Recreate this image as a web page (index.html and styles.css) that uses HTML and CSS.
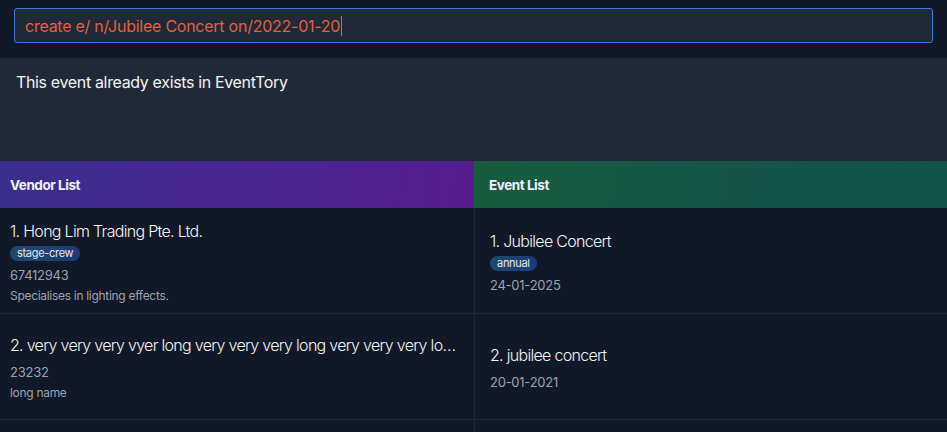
FILE: index.html
```html
<!DOCTYPE html>
<html>
<head>
<meta charset="utf-8">
<link rel="stylesheet" href="styles.css">
</head>
<body>
<div class="app">
  <div class="command-bar">
    <div class="command-input"><span class="cmd-text">create e/ n/Jubilee Concert on/2022-01-20</span><span class="caret"></span></div>
  </div>
  <div class="result">This event already exists in EventTory</div>
  <div class="lists">
    <div class="column vendors">
      <div class="col-header vendor-header">Vendor List</div>
      <div class="card">
        <div class="name">1. Hong Lim Trading Pte. Ltd.</div>
        <div class="tags"><span class="tag">stage-crew</span></div>
        <div class="phone">67412943</div>
        <div class="desc">Specialises in lighting effects.</div>
      </div>
      <div class="card">
        <div class="name">2. very very very vyer long very very very long very very very long name very very long</div>
        <div class="phone">23232</div>
        <div class="desc">long name</div>
      </div>
    </div>
    <div class="column events">
      <div class="col-header event-header">Event List</div>
      <div class="card">
        <div class="name">1. Jubilee Concert</div>
        <div class="tags"><span class="tag">annual</span></div>
        <div class="phone">24-01-2025</div>
      </div>
      <div class="card">
        <div class="name">2. jubilee concert</div>
        <div class="phone">20-01-2021</div>
      </div>
    </div>
  </div>
</div>
</body>
</html>
```

FILE: styles.css
```css
* { box-sizing: border-box; }
html, body { margin: 0; padding: 0; }
body {
  background: #111827;
  font-family: Inter, "Noto Sans", sans-serif;
  color: #f3f4f6;
  width: 947px;
  height: 432px;
  overflow: hidden;
}
.app { display: flex; flex-direction: column; height: 432px; }
.command-bar {
  height: 58px;
  padding: 8px 14px 0 14px;
  background: #111827;
}
.command-input {
  height: 35px;
  border: 1px solid #3b7ddd;
  border-radius: 3px;
  background: #1f2937;
  display: flex;
  align-items: center;
  padding-left: 10px;
  font-size: 16px;
  color: #e0603f;
  letter-spacing: -0.25px;
}
.caret {
  display: inline-block;
  width: 1px;
  height: 20px;
  background: #e0603f;
  margin-left: 1px;
}
.result {
  height: 103px;
  background: #1f2937;
  padding: 14px 16px;
  font-size: 16px;
  line-height: 20px;
  color: #f3f4f6;
  letter-spacing: -0.35px;
}
.lists { display: flex; flex: 1; }
.column { display: flex; flex-direction: column; min-width: 0; }
.vendors { width: 474px; }
.events { flex: 1; border-left: 1px solid #1f2937; }
.col-header {
  height: 47px;
  display: flex;
  align-items: center;
  font-size: 13.5px;
  font-weight: 700;
  color: #eef0ff;
  letter-spacing: -0.45px;
}
.vendor-header {
  padding-left: 10px;
  background: linear-gradient(100deg, #3a2e8c 0%, #4a2590 55%, #561d8c 100%);
}
.event-header {
  padding-left: 15px;
  margin-left: -1px;
  background: linear-gradient(100deg, #175c3e 0%, #155448 60%, #135449 100%);
}
.card {
  height: 106px;
  border-bottom: 1px solid #1f2937;
  display: flex;
  flex-direction: column;
  justify-content: center;
  padding: 3px 10px 0 10px;
  min-width: 0;
}
.events .card { padding-left: 15px; }
.name {
  font-size: 16px;
  line-height: 20px;
  font-weight: 300;
  color: #f3f4f6;
  white-space: nowrap;
  overflow: hidden;
  text-overflow: ellipsis;
  letter-spacing: -0.7px;
}
.tags { display: flex; margin-top: 5px; }
.tag {
  font-size: 11px;
  line-height: 15px;
  padding: 0 7px;
  border-radius: 8px;
  color: #e5e7eb;
  letter-spacing: -0.3px;
  background: linear-gradient(90deg, #1d4a6b, #1e3a7a);
}
.phone {
  font-size: 13px;
  line-height: 18px;
  margin-top: 5px;
  color: #9ca3af;
  letter-spacing: -0.25px;
}
.name + .phone { margin-top: 8px; }
.desc {
  font-size: 12px;
  line-height: 16px;
  margin-top: 4px;
  color: #9ca3af;
  letter-spacing: -0.3px;
}
```
